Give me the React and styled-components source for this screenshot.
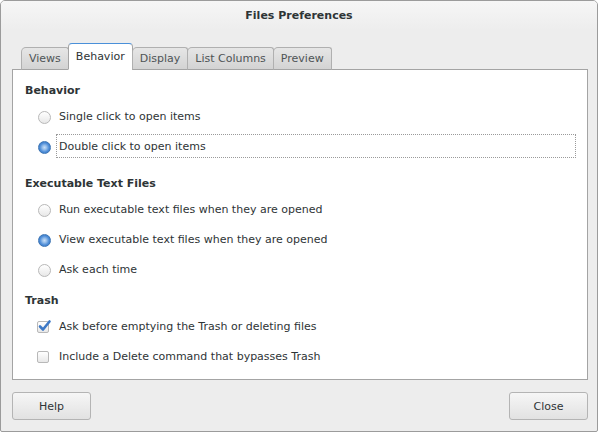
import styled, { createGlobalStyle } from "styled-components";

const GlobalStyle = createGlobalStyle`
  html, body {
    margin: 0;
    padding: 0;
    background: #ffffff;
  }
  body {
    font-family: "DejaVu Sans", "Liberation Sans", sans-serif;
    font-size: 11px;
    color: #2e3436;
  }
`;

const Window = styled.div`
  width: 596px;
  height: 430px;
  border: 1px solid #9b9b9b;
  border-radius: 5px 5px 2px 2px;
  background: #ededed;
  display: flex;
  flex-direction: column;
  overflow: hidden;
`;

const TitleBar = styled.div`
  height: 29px;
  display: flex;
  align-items: center;
  justify-content: center;
  background: linear-gradient(#f6f6f6, #ededed);
  font-weight: bold;
  font-size: 11px;
  color: #2e3436;
`;

const Body = styled.div`
  flex: 1;
  display: flex;
  flex-direction: column;
  padding: 13px 9px 0 11px;
`;

const TabStrip = styled.div`
  display: flex;
  align-items: flex-end;
  height: 27px;
  padding-left: 9px;
  position: relative;
  z-index: 1;
  margin-bottom: -1px;
`;

const Tab = styled.div`
  height: ${(p) => (p.$active ? "27px" : "23px")};
  box-sizing: border-box;
  padding: 0 7px;
  display: flex;
  align-items: center;
  justify-content: center;
  border: 1px solid ${(p) => (p.$active ? "#a4a4a4" : "#b0b0b0")};
  border-top-color: ${(p) => (p.$active ? "#4a90d9" : "#b0b0b0")};
  border-bottom: ${(p) => (p.$active ? "1px solid #ffffff" : "1px solid #a4a4a4")};
  border-radius: ${(p) => (p.$active ? "4px 4px 0 0" : "5px 3px 0 0")};
  background: ${(p) =>
    p.$active ? "#ffffff" : "linear-gradient(#e6e6e6, #d3d3d3)"};
  color: ${(p) => (p.$active ? "#2e3436" : "#4e5456")};
  margin-right: -1px;
`;

const Panel = styled.div`
  height: 311px;
  box-sizing: border-box;
  border: 1px solid #a4a4a4;
  background: #ffffff;
  padding: 11px 11px 0 12px;
  display: flex;
  flex-direction: column;
`;

const SectionTitle = styled.div`
  font-weight: bold;
  height: 20px;
  line-height: 20px;
  margin-top: ${(p) => p.$gap || 0}px;
  margin-bottom: 1px;
`;

const Row = styled.div`
  height: 30px;
  display: flex;
  align-items: center;
  padding-left: 31px;
  position: relative;
`;

const Focus = styled.div`
  position: absolute;
  left: 31px;
  right: 0;
  top: 2px;
  bottom: 4px;
  border: 1px dotted #9a9a9a;
  pointer-events: none;
`;

const Radio = styled.span`
  position: absolute;
  left: 13px;
  width: 13px;
  height: 13px;
  box-sizing: border-box;
  border-radius: 50%;
  border: 1px solid ${(p) => (p.$on ? "#3d74b3" : "#b8b8b8")};
  background: ${(p) =>
    p.$on
      ? "radial-gradient(circle at 50% 50%, #c8def6 0, #9cc2ec 25%, #4a8ad6 60%, #3a78c4 100%)"
      : "linear-gradient(#ffffff, #e8e8e8)"};
`;

const Check = styled.span`
  position: absolute;
  left: 12px;
  width: 12px;
  height: 12px;
  box-sizing: border-box;
  border-radius: 2px;
  border: 1px solid #b8b8b8;
  background: linear-gradient(#ffffff, #e8e8e8);
  svg {
    position: absolute;
    left: 0px;
    top: -3px;
  }
`;

const Label = styled.span`
  padding-left: 3px;
  line-height: 20px;
`;

const Footer = styled.div`
  display: flex;
  justify-content: space-between;
  padding-top: 12px;
`;

const Button = styled.div`
  width: 79px;
  height: 28px;
  box-sizing: border-box;
  border: 1px solid #b4b4b4;
  border-radius: 3px;
  background: linear-gradient(#f6f6f6, #e2e2e2);
  display: flex;
  align-items: center;
  justify-content: center;
  color: #2e3436;
`;

function RadioRow({ on, focus, children }) {
  return (
    <Row>
      <Radio $on={on} />
      {focus && <Focus />}
      <Label>{children}</Label>
    </Row>
  );
}

function CheckRow({ on, children }) {
  return (
    <Row>
      <Check>
        {on && (
          <svg width="14" height="14" viewBox="0 0 14 14">
            <path
              d="M2 7.5 L5 10.5 L11.5 2.5"
              fill="none"
              stroke="#3c78c6"
              strokeWidth="2.6"
              strokeLinecap="round"
              strokeLinejoin="round"
            />
          </svg>
        )}
      </Check>
      <Label>{children}</Label>
    </Row>
  );
}

const tabs = ["Views", "Behavior", "Display", "List Columns", "Preview"];

export default function App() {
  return (
    <>
      <GlobalStyle />
      <Window>
        <TitleBar>Files Preferences</TitleBar>
        <Body>
          <TabStrip>
            {tabs.map((t) => (
              <Tab key={t} $active={t === "Behavior"}>
                {t}
              </Tab>
            ))}
          </TabStrip>
          <Panel>
            <SectionTitle>Behavior</SectionTitle>
            <RadioRow>Single click to open items</RadioRow>
            <RadioRow on focus>
              Double click to open items
            </RadioRow>

            <SectionTitle $gap={12}>Executable Text Files</SectionTitle>
            <RadioRow>Run executable text files when they are opened</RadioRow>
            <RadioRow on>View executable text files when they are opened</RadioRow>
            <RadioRow>Ask each time</RadioRow>

            <SectionTitle $gap={6}>Trash</SectionTitle>
            <CheckRow on>Ask before emptying the Trash or deleting files</CheckRow>
            <CheckRow>Include a Delete command that bypasses Trash</CheckRow>
          </Panel>
          <Footer>
            <Button>Help</Button>
            <Button>Close</Button>
          </Footer>
        </Body>
      </Window>
    </>
  );
}
